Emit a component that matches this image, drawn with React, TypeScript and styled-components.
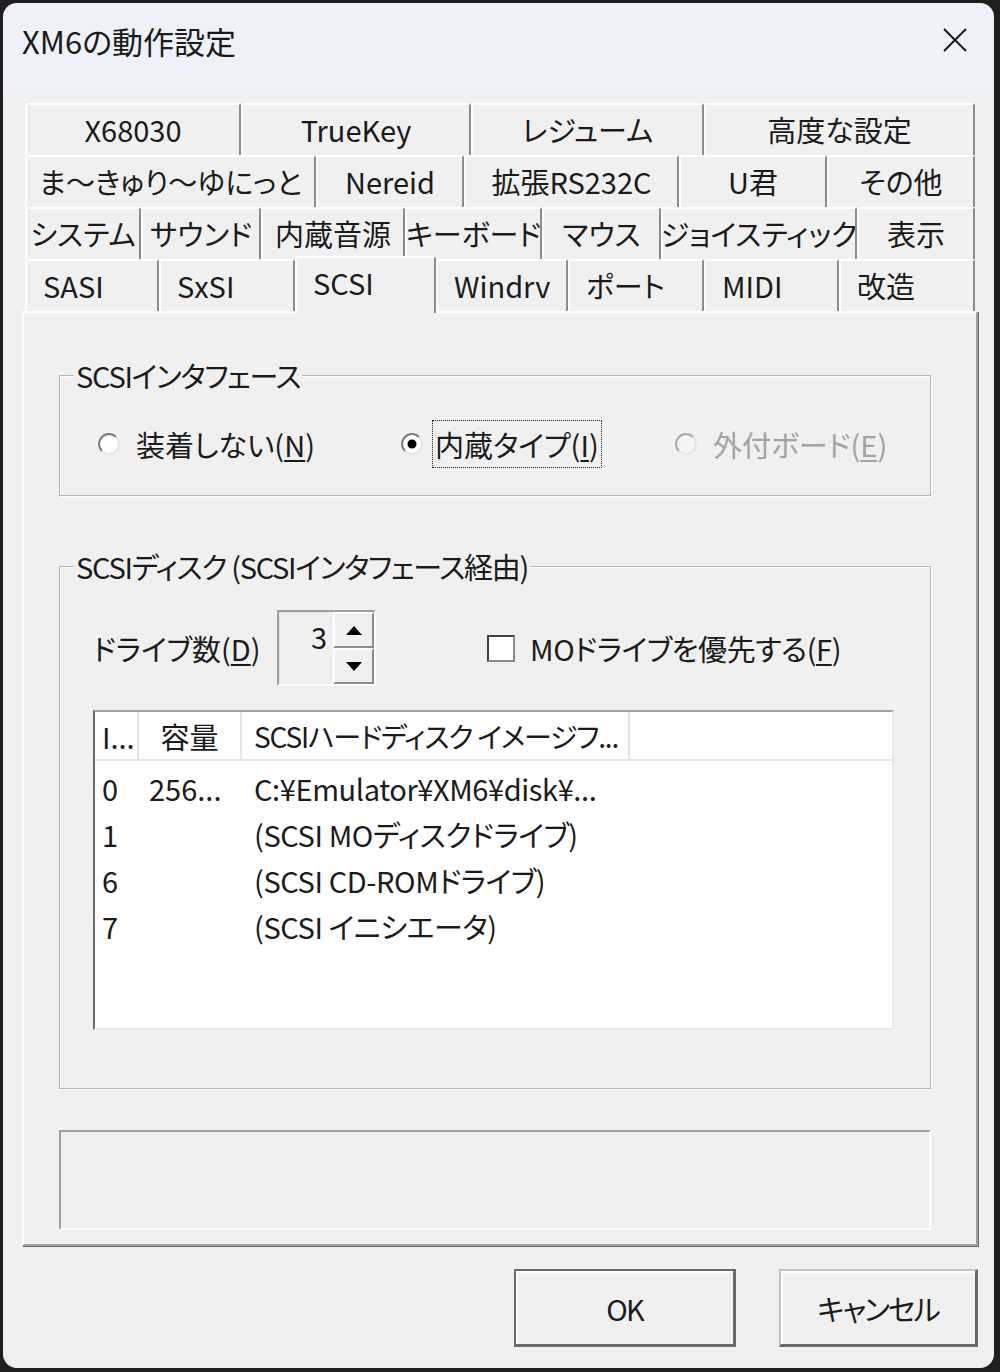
import * as React from "react";
import styled, { createGlobalStyle } from "styled-components";

const GlobalStyle = createGlobalStyle`
  html, body {
    margin: 0;
    padding: 0;
    background: #1e1e1e;
  }
  body {
    font-family: "Noto Sans CJK JP", "Noto Sans", sans-serif;
    font-feature-settings: "palt";
    color: #1b1b1b;
  }
  * {
    box-sizing: border-box;
  }
`;

const Screen = styled.div`
  width: 1000px;
  height: 1372px;
  padding: 3px 0 0 3px;
  background: #1e1e1e;
`;

const Window = styled.div`
  width: 991px;
  height: 1365px;
  border-radius: 14px;
  overflow: hidden;
  background: linear-gradient(#eef2f8 0, #eef2f8 72px, #f0f0f0 98px);
  display: flex;
  flex-direction: column;
`;

const TitleBar = styled.div`
  height: 74px;
  display: flex;
  align-items: center;
  justify-content: space-between;
  padding: 0 26px 0 19px;
  font-size: 31px;
  color: #1a1a1a;
`;

const Body = styled.div`
  padding: 26px 16px 0 19px;
  display: flex;
  flex-direction: column;
`;

const TabStrip = styled.div`
  display: flex;
  flex-direction: column;
  padding: 0 3px;
  position: relative;
  z-index: 1;
`;

const TabRow = styled.div`
  display: flex;
  height: 52px;
`;

const Tab = styled.div<{ $w: number; $left?: boolean; $active?: boolean }>`
  width: ${p => p.$w}px;
  height: ${p => (p.$active ? 57 : 52)}px;
  margin-top: ${p => (p.$active ? -3 : 0)}px;
  background: #f0f0f0;
  border-top: 2px solid #ffffff;
  border-left: 2px solid #ffffff;
  border-right: 2px solid #8c8c8c;
  border-radius: 3px 3px 0 0;
  display: flex;
  align-items: center;
  justify-content: ${p => (p.$left ? "flex-start" : "center")};
  padding: ${p => (p.$left ? "0 0 0 16px" : "0 2px")};
  padding-bottom: ${p => (p.$active ? 8 : 2)}px;
  font-size: 29px;
  white-space: nowrap;
  overflow: hidden;
  position: relative;
  z-index: ${p => (p.$active ? 2 : 1)};
`;

const Panel = styled.div`
  height: 935px;
  border-top: 2px solid #ffffff;
  border-left: 2px solid #ffffff;
  border-right: 2px solid #a0a0a0;
  border-bottom: 2px solid #a0a0a0;
  box-shadow: 1px 1px 0 #6c6c6c;
  padding: 44px 45px 0 35px;
  display: flex;
  flex-direction: column;
`;

const Group = styled.fieldset<{ $gap?: number }>`
  margin: ${p => p.$gap || 0}px 0 0 0;
  padding: 0;
  border: 1px solid #b4b4b4;
  box-shadow: inset 1px 1px 0 #ffffff, 1px 1px 0 #ffffff;
  min-width: 0;
`;

const Legend = styled.legend`
  margin-left: 14px;
  padding: 0 2px;
  font-size: 29px;
  line-height: 36px;
  letter-spacing: -1.3px;
  background: #f0f0f0;
`;

const RadioRow = styled.div`
  height: 102px;
  display: flex;
  align-items: center;
  padding-left: 37px;
`;

const RadioItem = styled.div<{ $w: number; $disabled?: boolean }>`
  width: ${p => p.$w}px;
  display: flex;
  align-items: center;
  gap: 12px;
  font-size: 29px;
  color: ${p => (p.$disabled ? "#a3a3a3" : "#1b1b1b")};
`;

const RadioLabel = styled.span<{ $focus?: boolean }>`
  padding: 4px 2px;
  border: 1px dotted ${p => (p.$focus ? "#222" : "transparent")};
  line-height: 38px;
  margin-left: ${p => (p.$focus ? -4 : 0)}px;
`;

const Key = styled.span`
  text-decoration: underline;
  text-underline-offset: 3px;
`;

const DiskBody = styled.div`
  height: 504px;
  padding: 26px 36px 0 33px;
  display: flex;
  flex-direction: column;
`;

const DriveRow = styled.div`
  height: 76px;
  display: flex;
  align-items: center;
  font-size: 29px;
`;

const DriveLabel = styled.span`
  width: 184px;
`;

const SpinBox = styled.div`
  width: 99px;
  height: 76px;
  display: flex;
  border-top: 2px solid #a0a0a0;
  border-left: 2px solid #a0a0a0;
  border-right: 2px solid #ffffff;
  border-bottom: 2px solid #ffffff;
  box-shadow: inset 1px 1px 0 #e3e3e3;
`;

const SpinValue = styled.div`
  flex: 1;
  text-align: right;
  padding: 4px 6px 0 0;
  font-size: 29px;
  line-height: 40px;
`;

const SpinButtons = styled.div`
  width: 41px;
  display: flex;
  flex-direction: column;
`;

const SpinButton = styled.div`
  flex: 1;
  background: #f0f0f0;
  border-top: 2px solid #ffffff;
  border-left: 2px solid #ffffff;
  border-right: 2px solid #8c8c8c;
  border-bottom: 2px solid #8c8c8c;
  display: flex;
  align-items: center;
  justify-content: center;
`;

const CheckWrap = styled.div`
  margin-left: 111px;
  display: flex;
  align-items: center;
  gap: 15px;
  letter-spacing: -0.4px;
`;

const CheckBox = styled.div`
  width: 28px;
  height: 27px;
  background: #ffffff;
  border: 2px solid;
  border-color: #3f3f3f #8a8a8a #8a8a8a #3f3f3f;
`;

const ListView = styled.div`
  margin-top: 24px;
  height: 320px;
  background: #ffffff;
  border-top: 2px solid #a0a0a0;
  border-left: 2px solid #6c6c6c;
  border-right: 2px solid #e8e8e8;
  border-bottom: 2px solid #e8e8e8;
  font-size: 29px;
`;

const columns = "44px 103px 388px 1fr";

const HeaderRow = styled.div`
  display: grid;
  grid-template-columns: ${columns};
  height: 49px;
  border-bottom: 2px solid #e5e5e5;
`;

const HeaderCell = styled.div<{ $center?: boolean; $pad: number; $tight?: boolean }>`
  border-right: 2px solid #e5e5e5;
  display: flex;
  align-items: center;
  justify-content: ${p => (p.$center ? "center" : "flex-start")};
  padding-left: ${p => (p.$center ? 0 : p.$pad)}px;
  font-size: ${p => (p.$tight ? 28 : 29)}px;
  letter-spacing: ${p => (p.$tight ? -1.2 : 0)}px;
  white-space: nowrap;
`;

const Rows = styled.div`
  padding-top: 4px;
`;

const Row = styled.div`
  display: grid;
  grid-template-columns: ${columns};
  height: 46px;
  align-items: center;
`;

const Cell = styled.div<{ $pad: number; $tight?: boolean }>`
  padding-left: ${p => p.$pad}px;
  letter-spacing: ${p => (p.$tight ? -0.4 : 0)}px;
  white-space: nowrap;
`;

const StatusBox = styled.div`
  margin-top: 41px;
  height: 100px;
  border-top: 2px solid #a0a0a0;
  border-left: 2px solid #a0a0a0;
  border-right: 2px solid #ffffff;
  border-bottom: 2px solid #ffffff;
`;

const ButtonRow = styled.div`
  margin-top: 23px;
  display: flex;
  justify-content: flex-end;
  gap: 43px;
`;

const Button = styled.div<{ $w: number; $default?: boolean }>`
  width: ${p => p.$w}px;
  height: 78px;
  background: #f0f0f0;
  border-style: solid;
  border-width: 2px 3px 3px 2px;
  border-color: ${p =>
    p.$default ? "#6a6a6a" : "#c4c4c4 #6a6a6a #6a6a6a #c4c4c4"};
  box-shadow: inset 2px 2px 0 #ffffff;
  display: flex;
  align-items: center;
  justify-content: center;
  font-size: 29px;
  letter-spacing: -2px;
`;

const Radio = ({ checked, disabled }: { checked?: boolean; disabled?: boolean }) => (
  <svg width="24" height="24" viewBox="0 0 24 24">
    <circle cx="12" cy="12" r="10" fill={disabled ? "#f4f4f4" : "#ffffff"} />
    <path d="M4.93 19.07 A10 10 0 0 1 19.07 4.93" fill="none" stroke={disabled ? "#a8a8a8" : "#7a7a7a"} strokeWidth="2" />
    <path d="M19.07 4.93 A10 10 0 0 1 4.93 19.07" fill="none" stroke="#e6e6e6" strokeWidth="2" />
    {checked && <circle cx="12" cy="12" r="4.5" fill="#000000" />}
  </svg>
);

const Arrow = ({ up }: { up?: boolean }) => (
  <svg width="16" height="9" viewBox="0 0 16 9">
    <path d={up ? "M0 9 L8 0 L16 9 Z" : "M0 0 L16 0 L8 9 Z"} fill="#000000" />
  </svg>
);

const tabRows: { label: string; w: number; active?: boolean }[][] = [
  [
    { label: "X68030", w: 216 },
    { label: "TrueKey", w: 230 },
    { label: "レジューム", w: 233 },
    { label: "高度な設定", w: 271 },
  ],
  [
    { label: "ま～きゅり～ゆにっと", w: 291 },
    { label: "Nereid", w: 148 },
    { label: "拡張RS232C", w: 215 },
    { label: "U君", w: 148 },
    { label: "その他", w: 148 },
  ],
  [
    { label: "システム", w: 116 },
    { label: "サウンド", w: 120 },
    { label: "内蔵音源", w: 144 },
    { label: "キーボード", w: 137 },
    { label: "マウス", w: 119 },
    { label: "ジョイスティック", w: 196 },
    { label: "表示", w: 118 },
  ],
  [
    { label: "SASI", w: 134 },
    { label: "SxSI", w: 136 },
    { label: "SCSI", w: 141, active: true },
    { label: "Windrv", w: 132 },
    { label: "ポート", w: 136 },
    { label: "MIDI", w: 135 },
    { label: "改造", w: 136 },
  ],
];

const disks = [
  { id: "0", size: "256...", path: "C:¥Emulator¥XM6¥disk¥..." },
  { id: "1", size: "", path: "(SCSI MOディスクドライブ)" },
  { id: "6", size: "", path: "(SCSI CD-ROMドライブ)" },
  { id: "7", size: "", path: "(SCSI イニシエータ)" },
];

const App = () => {
  return (
    <Screen>
      <GlobalStyle />
      <Window>
        <TitleBar>
          <span>XM6の動作設定</span>
          <svg width="26" height="26" viewBox="0 0 26 26">
            <path d="M2 2 L24 24 M24 2 L2 24" stroke="#1a1a1a" strokeWidth="2" />
          </svg>
        </TitleBar>
        <Body>
          <TabStrip>
            {tabRows.map((row, i) => (
              <TabRow key={i}>
                {row.map(t => (
                  <Tab key={t.label} $w={t.w} $left={i === 3} $active={t.active}>
                    {t.label}
                  </Tab>
                ))}
              </TabRow>
            ))}
          </TabStrip>
          <Panel>
            <Group>
              <Legend>SCSIインタフェース</Legend>
              <RadioRow>
                <RadioItem $w={303}>
                  <Radio />
                  <RadioLabel>
                    装着しない(<Key>N</Key>)
                  </RadioLabel>
                </RadioItem>
                <RadioItem $w={274}>
                  <Radio checked />
                  <RadioLabel $focus>
                    内蔵タイプ(<Key>I</Key>)
                  </RadioLabel>
                </RadioItem>
                <RadioItem $w={230} $disabled>
                  <Radio disabled />
                  <RadioLabel>
                    外付ボード(<Key>E</Key>)
                  </RadioLabel>
                </RadioItem>
              </RadioRow>
            </Group>
            <Group $gap={52}>
              <Legend>SCSIディスク (SCSIインタフェース経由)</Legend>
              <DiskBody>
                <DriveRow>
                  <DriveLabel>
                    ドライブ数(<Key>D</Key>)
                  </DriveLabel>
                  <SpinBox>
                    <SpinValue>3</SpinValue>
                    <SpinButtons>
                      <SpinButton>
                        <Arrow up />
                      </SpinButton>
                      <SpinButton>
                        <Arrow />
                      </SpinButton>
                    </SpinButtons>
                  </SpinBox>
                  <CheckWrap>
                    <CheckBox />
                    <span>
                      MOドライブを優先する(<Key>F</Key>)
                    </span>
                  </CheckWrap>
                </DriveRow>
                <ListView>
                  <HeaderRow>
                    <HeaderCell $pad={7}>I...</HeaderCell>
                    <HeaderCell $pad={0} $center>容量</HeaderCell>
                    <HeaderCell $pad={12} $tight>SCSIハードディスク イメージフ...</HeaderCell>
                    <div />
                  </HeaderRow>
                  <Rows>
                    {disks.map(d => (
                      <Row key={d.id}>
                        <Cell $pad={7}>{d.id}</Cell>
                        <Cell $pad={10}>{d.size}</Cell>
                        <Cell $pad={12} $tight>{d.path}</Cell>
                        <div />
                      </Row>
                    ))}
                  </Rows>
                </ListView>
              </DiskBody>
            </Group>
            <StatusBox />
          </Panel>
          <ButtonRow>
            <Button $w={222} $default>OK</Button>
            <Button $w={199}>キャンセル</Button>
          </ButtonRow>
        </Body>
      </Window>
    </Screen>
  );
};

export default App;
